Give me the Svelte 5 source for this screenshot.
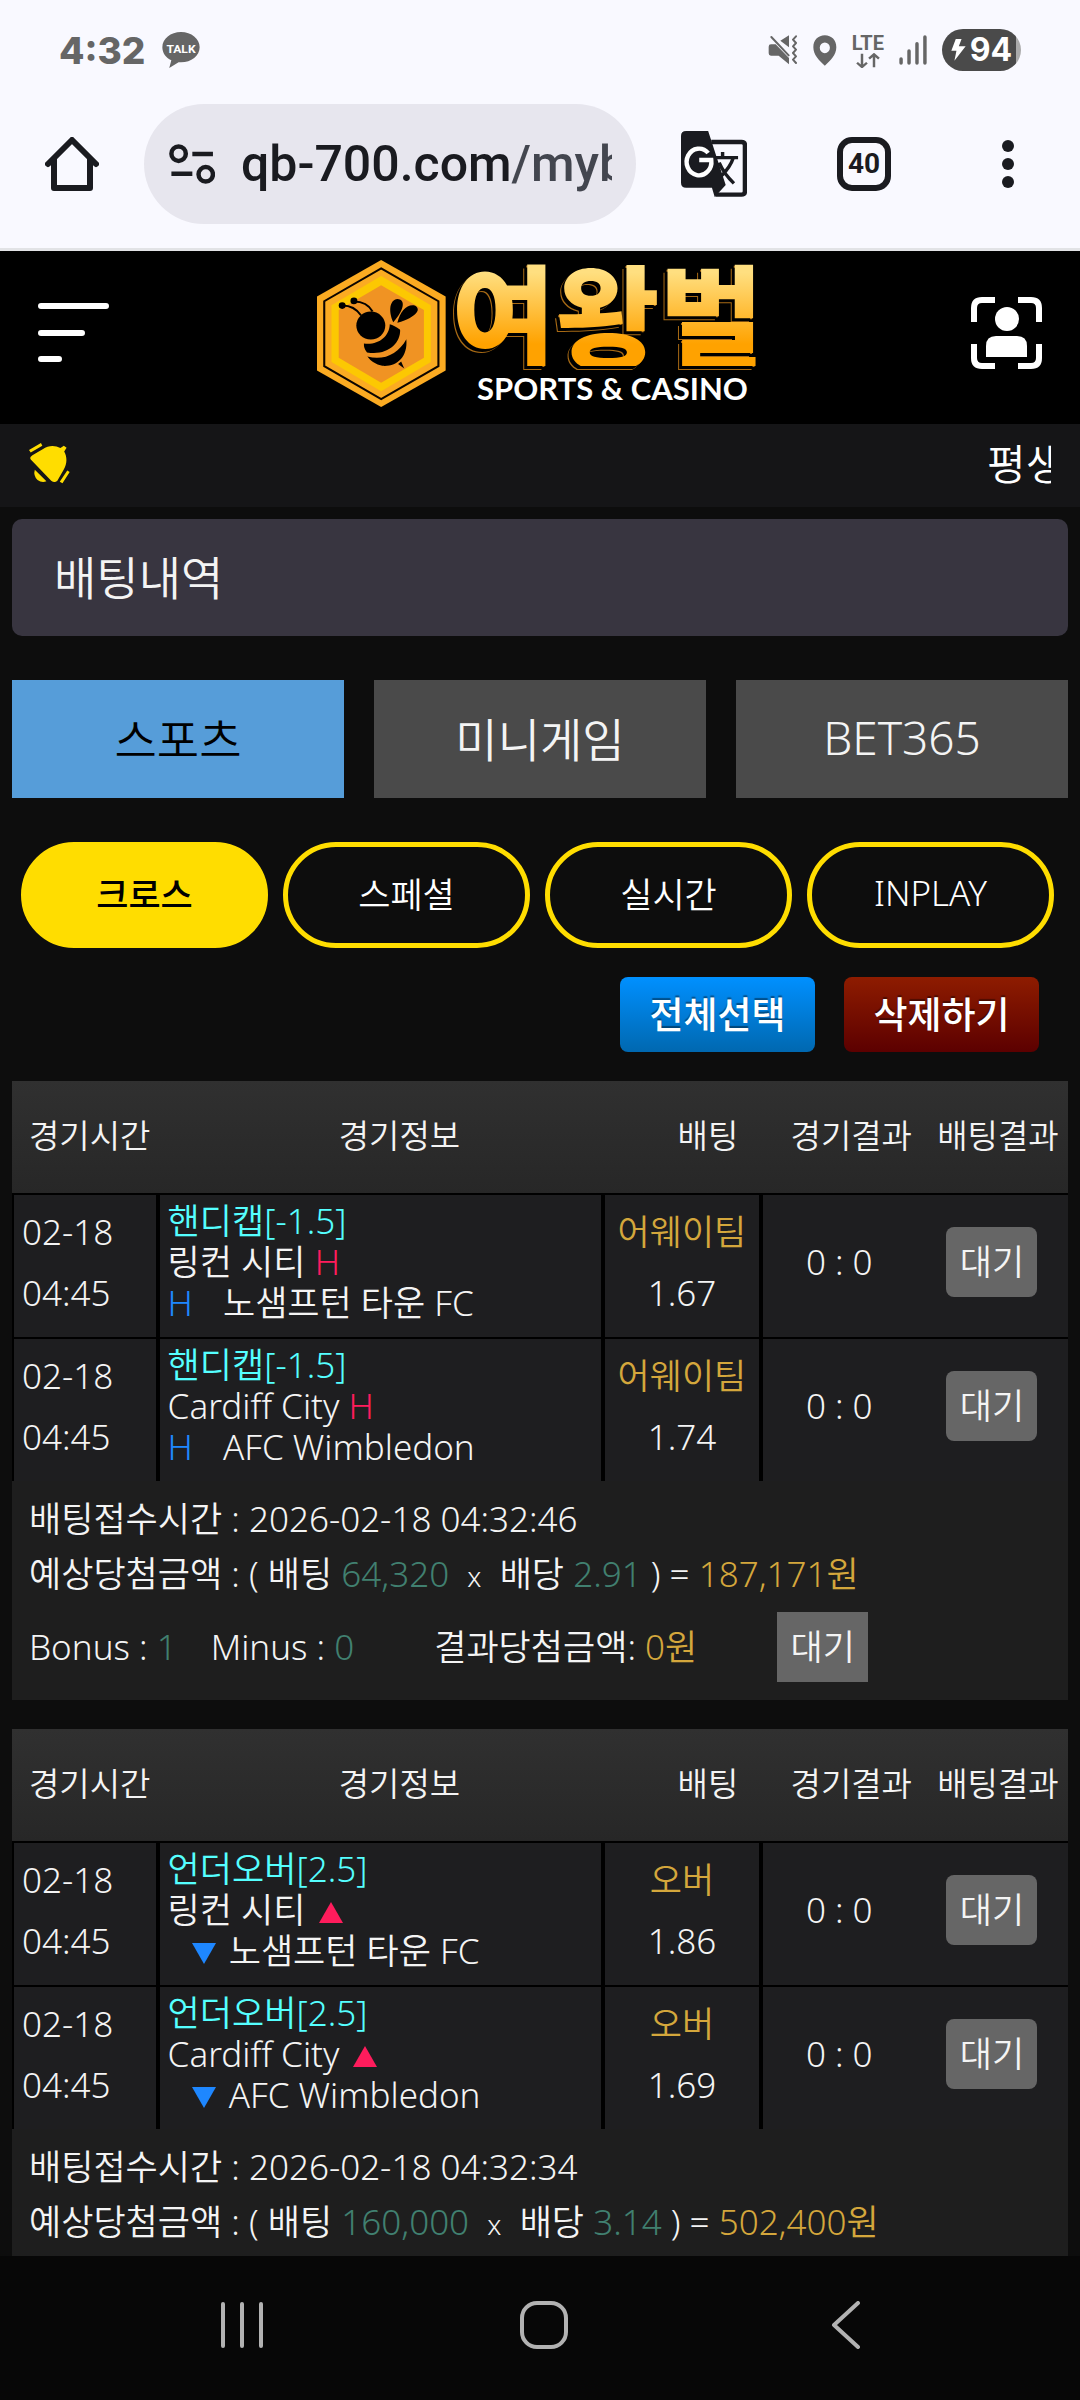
<script>
	const tabs = ['스포츠', '미니게임', 'BET365'];
	const filters = ['크로스', '스페셜', '실시간', 'INPLAY'];
	const columns = [
		{ key: 'time', label: '경기시간' },
		{ key: 'info', label: '경기정보' },
		{ key: 'bet', label: '배팅' },
		{ key: 'score', label: '경기결과' },
		{ key: 'state', label: '배팅결과' }
	];

	const slips = [
		{
			games: [
				{ date: '02-18', time: '04:45', type: '핸디캡[-1.5]', home: '링컨 시티', away: '노샘프턴 타운 FC', mark: 'H', pick: '어웨이팀', odds: '1.67', score: '0 : 0' },
				{ date: '02-18', time: '04:45', type: '핸디캡[-1.5]', home: 'Cardiff City', away: 'AFC Wimbledon', mark: 'H', pick: '어웨이팀', odds: '1.74', score: '0 : 0' }
			],
			placedAt: '2026-02-18 04:32:46',
			stake: '64,320',
			odds: '2.91',
			expected: '187,171원',
			result: { bonus: 1, minus: 0, amount: '0원' }
		},
		{
			games: [
				{ date: '02-18', time: '04:45', type: '언더오버[2.5]', home: '링컨 시티', away: '노샘프턴 타운 FC', mark: 'arrow', pick: '오버', odds: '1.86', score: '0 : 0' },
				{ date: '02-18', time: '04:45', type: '언더오버[2.5]', home: 'Cardiff City', away: 'AFC Wimbledon', mark: 'arrow', pick: '오버', odds: '1.69', score: '0 : 0' }
			],
			placedAt: '2026-02-18 04:32:34',
			stake: '160,000',
			odds: '3.14',
			expected: '502,400원',
			result: null
		}
	];

	let activeTab = $state(0);
	let activeFilter = $state(0);
	let address = $state('qb-700.com/mybet');
</script>

<div class="app">
	<div class="browser">
		<div class="status">
			<span class="clock">4:32</span>
			<svg class="talk" width="38" height="36" viewBox="469 98 110 107" preserveAspectRatio="none">
				<path d="M524 98c-30 0-54 20-54 45 0 17 10 31 26 39l-6 23 27-17h7c30 0 54-20 54-45s-24-45-54-45z" fill="#666" />
				<text x="524" y="159" text-anchor="middle" font-size="35" font-weight="700" fill="#fff">TALK</text>
			</svg>
			<div class="status-icons">
				<svg width="30" height="30" viewBox="657 105 90 90" preserveAspectRatio="none" fill="#666">
					<path d="M659 140q0-7 7-7h14l40 41v19l-31-26h-23q-7 0-7-7zM694 122l26-16v36z" />
					<path d="M667 111l52 55" stroke="#666" stroke-width="6" stroke-linecap="round" />
					<path d="M741 109l-9 10 9 10-9 10 9 10-9 10 9 10-9 10 9 10" fill="none" stroke="#666" stroke-width="6" stroke-linecap="round" stroke-linejoin="round" />
				</svg>
				<svg width="24" height="31" viewBox="792 103 71 92" preserveAspectRatio="none" fill="#666" fill-rule="evenodd">
					<path d="M827 104c-20 0-34 15-34 35 0 23 18 40 34 55 16-15 34-32 34-55 0-20-14-35-34-35zm0 21a15 16 0 1 1 0 32 15 16 0 0 1 0-32z" />
				</svg>
				<span class="lte">
					<span>LTE</span>
					<svg width="24" height="15" viewBox="927 154 68 46" preserveAspectRatio="none" fill="none" stroke="#666" stroke-width="7">
						<path d="M944 156v40M930 184l14 13 14-13M978 198v-40M964 171l14-13 14 13" />
					</svg>
				</span>
				<svg width="28" height="30" viewBox="1044 104 81 90" preserveAspectRatio="none" stroke="#666" stroke-width="10" stroke-linecap="round">
					<path d="M1050 176v12M1073 152v36M1096 130v58M1119 110v78" />
				</svg>
				<span class="battery">
					<svg width="15" height="22" viewBox="1192 116 44 66" preserveAspectRatio="none" fill="#fff">
						<path d="M1206 116h17l-8 22h20l-33 43 6-30h-15z" />
					</svg>
					94
				</span>
			</div>
		</div>
		<div class="toolbar">
			<button aria-label="홈">
				<svg width="54" height="54" viewBox="0 0 54 54" fill="none" stroke="#1a1b20" stroke-width="6" stroke-linecap="round" stroke-linejoin="round">
					<path d="M3 27L27 3l24 24M9 22v29h36V22" />
				</svg>
			</button>
			<label class="address">
				<svg width="46" height="40" viewBox="490 434 134 116" preserveAspectRatio="none" fill="none" stroke="#1a1b20" stroke-width="13">
					<circle cx="518" cy="462" r="21" />
					<circle cx="597" cy="522" r="21" />
					<path d="M558 463h60M497 520h61" />
				</svg>
				<input type="text" aria-label="주소" bind:value={address} />
			</label>
			<button class="translate" aria-label="번역">
				<svg width="66" height="66" viewBox="409 393 192 198" preserveAspectRatio="none">
					<path d="M497 426h88q10 0 10 10v138q0 10-10 10h-76" fill="none" stroke="#1a1b20" stroke-width="13" />
					<path d="M424 393h64l51 162-32 36-8-28h-75q-15 0-15-15V408q0-15 15-15z" fill="#1a1b20" />
					<path d="M488 459a36 40 0 1 0 9 21h-35" fill="none" stroke="#fff" stroke-width="13" />
					<path d="M530 456v16M510 473h65M561 474q-9 28-35 54M520 488q14 34 43 62" fill="none" stroke="#1a1b20" stroke-width="10" />
				</svg>
			</button>
			<button class="count">40</button>
			<button aria-label="더보기">
				<svg width="54" height="54" viewBox="0 0 54 54" fill="#1a1b20">
					<circle cx="27" cy="9" r="6" />
					<circle cx="27" cy="27" r="6" />
					<circle cx="27" cy="45" r="6" />
				</svg>
			</button>
		</div>
	</div>

	<header>
		<button aria-label="메뉴">
			<svg width="71" height="72" viewBox="0 0 71 72" stroke="#fff" stroke-width="6" stroke-linecap="round">
				<path d="M3 9h65M3 36h41M3 62h18" />
			</svg>
		</button>
		<a class="logo" href="/">
			<svg width="129" height="147" viewBox="926 30 374 442" preserveAspectRatio="none">
				<path d="M1112 30l187 110v222l-187 110-186-110V140z" fill="#fbab22" />
				<path d="M1112 55l166 99v195l-166 99-165-99V154z" fill="#fbab22" stroke="#0d0500" stroke-width="6" />
				<path d="M1112 78l144 88v171l-144 88-144-88V166z" fill="#fcc802" />
				<path d="M1112 106l124 74v144l-124 75-123-75V180z" fill="#f09323" />
				<g fill="#000">
					<circle cx="999" cy="167" r="10" />
					<circle cx="1033" cy="153" r="10" />
					<path d="M1000 167q34 0 54 30M1033 155q38 0 54 30" fill="none" stroke="#000" stroke-width="6" />
					<circle cx="1082" cy="227" r="42" />
					<path d="M1147 217c-15-36-10-67 12-70 22 1 24 28-12 70zM1159 219c8-36 27-56 48-53 23 9 13 34-48 53z" />
					<path d="M1137 223q13 3 30 17c2 41-38 79-96 68q-10-12-9-27c40 6 74-20 75-58z" />
					<path d="M1185 268c5 54-29 84-70 80q-28-6-43-28c47 14 90-8 113-52z" />
					<path d="M1161 343l9-8 9 21z" />
				</g>
			</svg>
			<span class="brand">
				<strong>여왕벌</strong>
				<small>SPORTS &amp; CASINO</small>
			</span>
		</a>
		<button aria-label="내 정보">
			<svg width="71" height="72" viewBox="0 0 71 72" fill="#fff">
				<path d="M3 25V11q0-8 8-8h13M47 3h13q8 0 8 8v14M3 47v14q0 8 8 8h13M47 69h13q8 0 8-8V47" fill="none" stroke="#fff" stroke-width="6" />
				<circle cx="36" cy="22" r="12" />
				<path d="M15 60V49q0-10 10-10h21q10 0 10 10v11z" />
			</svg>
		</button>
	</header>

	<div class="notice">
		<svg width="41" height="41" viewBox="86 576 120 124" preserveAspectRatio="none" fill="#fd0">
			<path d="M96 613l30-18c18-13 36-12 52-4l10-7 8 6-7 12c9 16 9 37-2 56l-18 32q-8 8-18 0l-57-61q-10-8 2-16z" />
			<path d="M103 657l34 35q-14 5-26-4-13-13-8-31zM86 597l35-21 4 8-34 21zM198 659l7 5-21 34-8-5z" />
		</svg>
		<div class="marquee"><span>평생</span></div>
	</div>

	<main>
		<h1>배팅내역</h1>

		<div class="tabs">
			{#each tabs as tab, i}
				<button class:active={i === activeTab} onclick={() => (activeTab = i)}>{tab}</button>
			{/each}
		</div>

		<div class="filters">
			{#each filters as filter, i}
				<button class:active={i === activeFilter} onclick={() => (activeFilter = i)}>{filter}</button>
			{/each}
		</div>

		<div class="actions">
			<button class="select-all">전체선택</button>
			<button class="delete">삭제하기</button>
		</div>

		{#each slips as slip}
			<section class="slip">
				<table>
					<thead>
						<tr>
							{#each columns as column}
								<th class={column.key}>{column.label}</th>
							{/each}
						</tr>
					</thead>
					<tbody>
						{#each slip.games as game}
							<tr>
								<td class="time">{game.date}<br />{game.time}</td>
								<td class="info">
									<div class="type">{game.type}</div>
									{#if game.mark === 'H'}
										<div>{game.home} <span class="home">H</span></div>
										<div><span class="away handicap">H</span>{game.away}</div>
									{:else}
										<div>
											{game.home}
											<svg class="home" width="24" height="21" viewBox="0 0 24 21"><path d="M12 0l12 21H0z" fill="currentColor" /></svg>
										</div>
										<div>
											<svg class="away down" width="24" height="21" viewBox="0 0 24 21"><path d="M12 21L0 0h24z" fill="currentColor" /></svg>
											{game.away}
										</div>
									{/if}
								</td>
								<td class="bet"><span class="gold">{game.pick}</span><br />{game.odds}</td>
								<td class="score">{game.score}</td>
								<td class="state"><span class="badge rounded">대기</span></td>
							</tr>
						{/each}
					</tbody>
				</table>
				<div class="summary">
					<p>배팅접수시간 : {slip.placedAt}</p>
					<p>
						예상당첨금액 : ( 배팅 <span class="green">{slip.stake}</span> &nbsp;<span class="times">x</span>&nbsp; 배당
						<span class="green">{slip.odds}</span> ) = <span class="gold">{slip.expected}</span>
					</p>
					{#if slip.result}
						<div class="result">
							<span class="bonus">Bonus : <span class="green">{slip.result.bonus}</span></span>
							<span>Minus : <span class="green">{slip.result.minus}</span></span>
							<span>결과당첨금액: <span class="gold">{slip.result.amount}</span></span>
							<span class="badge">대기</span>
						</div>
					{/if}
				</div>
			</section>
		{/each}
	</main>

	<nav>
		<button aria-label="최근 앱">
			<svg width="44" height="48" viewBox="0 0 44 48" stroke="#b2b2b2" stroke-width="4" stroke-linecap="round">
				<path d="M3 3v42M22 3v42M41 3v42" />
			</svg>
		</button>
		<button aria-label="홈 화면">
			<svg width="50" height="50" viewBox="0 0 50 50" fill="none" stroke="#b2b2b2" stroke-width="4">
				<rect x="3" y="3" width="44" height="44" rx="15" />
			</svg>
		</button>
		<button aria-label="뒤로">
			<svg width="30" height="48" viewBox="0 0 30 48" fill="none" stroke="#b2b2b2" stroke-width="4" stroke-linecap="round" stroke-linejoin="round">
				<path d="M27 2L3 24l24 22" />
			</svg>
		</button>
	</nav>
</div>

<style>
	:global(body) {
		background: #0d0d0d;
	}

	.app {
		display: flex;
		flex-direction: column;
		height: 100vh;
		overflow: hidden;
		color: #f4f4f4;
		font-family: 'Noto Sans', 'Noto Sans CJK KR', sans-serif;
		font-size: 35px;
		font-weight: 350;
	}

	button {
		padding: 0;
		border: 0;
		background: none;
		color: inherit;
		font: inherit;
		cursor: pointer;
	}

	svg {
		display: block;
		flex-shrink: 0;
	}

	/* Browser chrome */
	.browser {
		border-bottom: 3px solid #e2e3e6;
		background: #f9f9ff;
		color: #1a1b20;
		font-family: Roboto, 'Liberation Sans', sans-serif;
	}

	.status {
		display: flex;
		align-items: center;
		height: 100px;
		padding: 0 59px;
		color: #666;
		font-weight: 700;
	}

	.clock {
		width: 103px;
		font-family: Inter, Roboto, sans-serif;
		font-size: 37px;
		font-weight: 800;
	}

	.status-icons {
		display: flex;
		align-items: center;
		gap: 15px;
		margin-left: auto;
	}

	.lte {
		display: flex;
		flex-direction: column;
		align-items: center;
		font-size: 20px;
		line-height: 20px;
	}

	.battery {
		display: flex;
		align-items: center;
		justify-content: center;
		gap: 4px;
		width: 79px;
		height: 42px;
		border-radius: 21px;
		background: linear-gradient(to right, #4a4a4a 74px, #aaa 74px);
		color: #fff;
		font-family: Inter, Roboto, sans-serif;
		font-size: 32px;
		line-height: 42px;
	}

	.toolbar {
		display: flex;
		align-items: center;
		gap: 90px;
		height: 120px;
		padding: 4px 45px 24px;
	}

	.address {
		display: flex;
		flex: 1;
		align-items: center;
		gap: 26px;
		min-width: 0;
		height: 120px;
		box-sizing: border-box;
		margin: 0 -45px;
		padding: 0 24px 0 25px;
		border-radius: 60px;
		background: #e7e6ee;
	}

	.address input {
		flex: 1;
		min-width: 0;
		padding: 0;
		border: 0;
		outline: 0;
		background: linear-gradient(to right, #1a1b20 270px, #43464f 270px);
		background-clip: text;
		color: transparent;
		font: 500 50px/70px Roboto, 'Liberation Sans', sans-serif;
	}

	.count {
		width: 54px;
		height: 54px;
		border: 6px solid #1a1b20;
		border-radius: 15px;
		font-size: 28px;
		font-weight: 700;
		line-height: 42px;
	}

	/* Site header */
	header {
		display: flex;
		align-items: center;
		justify-content: space-between;
		height: 173px;
		padding: 0 38px;
		background: #000;
		box-sizing: border-box;
		flex-shrink: 0;
	}

	header button {
		margin-bottom: 10px;
	}

	.logo {
		display: flex;
		align-items: center;
		gap: 6px;
		margin-bottom: 9px;
		color: #fff;
		text-decoration: none;
	}

	.brand {
		display: flex;
		flex-direction: column;
		align-items: center;
	}

	.brand strong {
		background: linear-gradient(#ffdf80 15%, #ffa200 80%);
		background-clip: text;
		color: transparent;
		filter: drop-shadow(-3px 3px 0 #000) drop-shadow(-1px 1px 0 #a86a14);
		font-family: 'Noto Sans CJK KR', sans-serif;
		font-size: 113px;
		font-weight: 900;
		line-height: 110px;
	}

	.brand small {
		padding-left: 10px;
		font-family: Lato, sans-serif;
		font-size: 31px;
		font-weight: 700;
		line-height: 44px;
	}

	.notice {
		display: flex;
		align-items: center;
		flex-shrink: 0;
		height: 83px;
		padding: 0 29px 4px;
		background: #151517;
		box-sizing: border-box;
	}

	.marquee {
		flex: 1;
		overflow: hidden;
		color: #fff;
		font-size: 42px;
		line-height: 60px;
		white-space: nowrap;
	}

	.marquee span {
		margin-left: calc(100% - 64px);
	}

	/* Bet history */
	main {
		flex: 1;
		min-height: 0;
		overflow: hidden;
		padding: 12px 12px 0;
	}

	h1 {
		margin: 0 0 44px;
		padding: 0 42px;
		border-radius: 10px;
		background: #383540;
		font-size: 46px;
		font-weight: 350;
		line-height: 117px;
	}

	.tabs {
		display: grid;
		grid-template-columns: repeat(3, 1fr);
		gap: 30px;
	}

	.tabs button {
		height: 118px;
		padding-bottom: 4px;
		background: #4a4a4a;
		font-size: 46px;
	}

	.tabs .active {
		background: #569dd9;
		color: #000;
	}

	.filters {
		display: grid;
		grid-template-columns: repeat(4, 1fr);
		gap: 15px;
		padding: 44px 14px 29px 9px;
	}

	.filters button {
		height: 106px;
		padding-bottom: 6px;
		border: 5px solid #fd0;
		border-radius: 53px;
		color: #fff;
	}

	.filters .active {
		background: #fd0;
		color: #000;
		font-weight: 500;
	}

	.actions {
		display: flex;
		justify-content: flex-end;
		gap: 29px;
		padding: 0 29px 29px 0;
	}

	.actions button {
		width: 195px;
		height: 75px;
		padding-bottom: 4px;
		border-radius: 8px;
		color: #fff;
		font-size: 37px;
		font-weight: 500;
		text-shadow: 0 -2px 1px rgba(0, 0, 0, 0.4);
	}

	.select-all {
		background: linear-gradient(#0090ff, #0068b0);
	}

	.delete {
		background: linear-gradient(#8e1c00, #5c0000);
	}

	.slip {
		margin-bottom: 29px;
		background: #1e1e1e;
	}

	table {
		width: 100%;
		border-spacing: 0;
		table-layout: fixed;
	}

	th {
		height: 112px;
		padding: 0 0 6px;
		font-size: 33px;
		font-weight: 350;
		white-space: nowrap;
		box-sizing: border-box;
	}

	thead {
		background: linear-gradient(#303030, #272727);
	}

	th.time {
		width: 13.6%;
		padding-left: 17px;
		text-align: left;
	}

	th.info {
		width: 42.2%;
		padding-left: 42px;
	}

	th.bet {
		width: 14.9%;
		padding-left: 56px;
	}

	th.score {
		width: 14.9%;
		padding-left: 28px;
	}

	th.state {
		width: 14.4%;
		padding-left: 12px;
	}

	td {
		height: 123px;
		padding: 5px 0 14px;
		border-top: 2px solid #000;
		border-left: 4px solid #000;
		background: #1e1e20;
		line-height: 61px;
		text-align: center;
	}

	td.time {
		padding-left: 8px;
		border-left-width: 2px;
		text-align: left;
	}

	td.info {
		padding-left: 8px;
		line-height: 41px;
		text-align: left;
		white-space: nowrap;
	}

	td.state {
		border-left: 0;
	}

	td svg {
		display: inline-block;
		margin: 0 4px;
	}

	.type {
		color: #5ff;
	}

	.home {
		color: #ff1c5c;
	}

	.away {
		color: #1e87ff;
	}

	.handicap {
		margin-right: 30px;
	}

	td .down {
		margin-left: 24px;
	}

	.gold {
		color: #d4a73c;
	}

	.green {
		color: #418070;
	}

	.badge {
		display: inline-block;
		width: 91px;
		background: #666;
		line-height: 70px;
		text-align: center;
	}

	.rounded {
		border-radius: 8px;
		vertical-align: middle;
	}

	.summary {
		padding: 10px 17px 18px;
	}

	.summary p {
		margin: 0;
		line-height: 55px;
		white-space: nowrap;
	}

	.times {
		font-size: 28px;
	}

	.result {
		display: flex;
		gap: 80px;
		margin-top: 8px;
		line-height: 70px;
		white-space: nowrap;
	}

	.bonus {
		margin-right: -46px;
	}

	/* System navigation */
	nav {
		display: grid;
		grid-template-columns: repeat(3, 1fr);
		flex-shrink: 0;
		height: 144px;
		padding: 0 83px 6px 91px;
		background: #070707;
		box-sizing: border-box;
	}

	nav button {
		display: flex;
		align-items: center;
		justify-content: center;
	}
</style>
